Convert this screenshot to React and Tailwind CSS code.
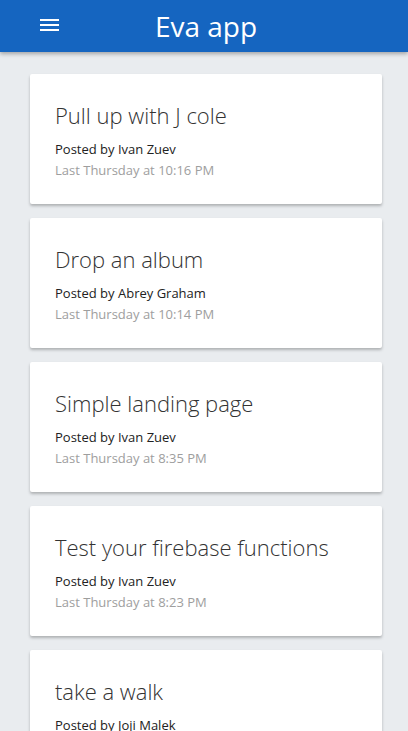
import React from 'react';

const posts = [
    { title: 'Pull up with J cole', author: 'Ivan Zuev', time: 'Last Thursday at 10:16 PM' },
    { title: 'Drop an album', author: 'Abrey Graham', time: 'Last Thursday at 10:14 PM' },
    { title: 'Simple landing page', author: 'Ivan Zuev', time: 'Last Thursday at 8:35 PM' },
    { title: 'Test your firebase functions', author: 'Ivan Zuev', time: 'Last Thursday at 8:23 PM' },
    { title: 'take a walk', author: 'Joji Malek', time: 'Last Thursday at 8:10 PM' },
];

const PostCard = ({ post }) => (
    <div className="bg-white rounded-[2px] shadow-[0_2px_3px_rgba(0,0,0,0.25)] px-[25px] pt-[25px] pb-[23px]">
        <h2 className="text-[22px] leading-[32px] font-light text-[#333]">{post.title}</h2>
        <p className="mt-[8px] text-[13px] leading-[21px] text-[#222]">Posted by {post.author}</p>
        <p className="text-[13px] leading-[21px] text-[#9e9e9e]">{post.time}</p>
    </div>
);

export default function App() {
    return (
        <div className="h-[731px] overflow-hidden bg-[#e9ecef] font-['Open_Sans',sans-serif]">
            <header className="relative z-10 h-[52px] bg-[#1565c0] shadow-[0_2px_4px_rgba(0,0,0,0.3)] flex items-center justify-center">
                <button className="absolute left-[40px] top-[19px] flex flex-col gap-[3px]" type="button">
                    <span className="block w-[19px] h-[2px] bg-white"></span>
                    <span className="block w-[19px] h-[2px] bg-white"></span>
                    <span className="block w-[19px] h-[2px] bg-white"></span>
                </button>
                <h1 className="text-white text-[28px] leading-none pl-[4px]">Eva app</h1>
            </header>

            <main className="pl-[30px] pr-[26px] pt-[22px] flex flex-col gap-[14px]">
                {posts.map((post) => (
                    <PostCard key={post.title} post={post} />
                ))}
            </main>
        </div>
    );
}
